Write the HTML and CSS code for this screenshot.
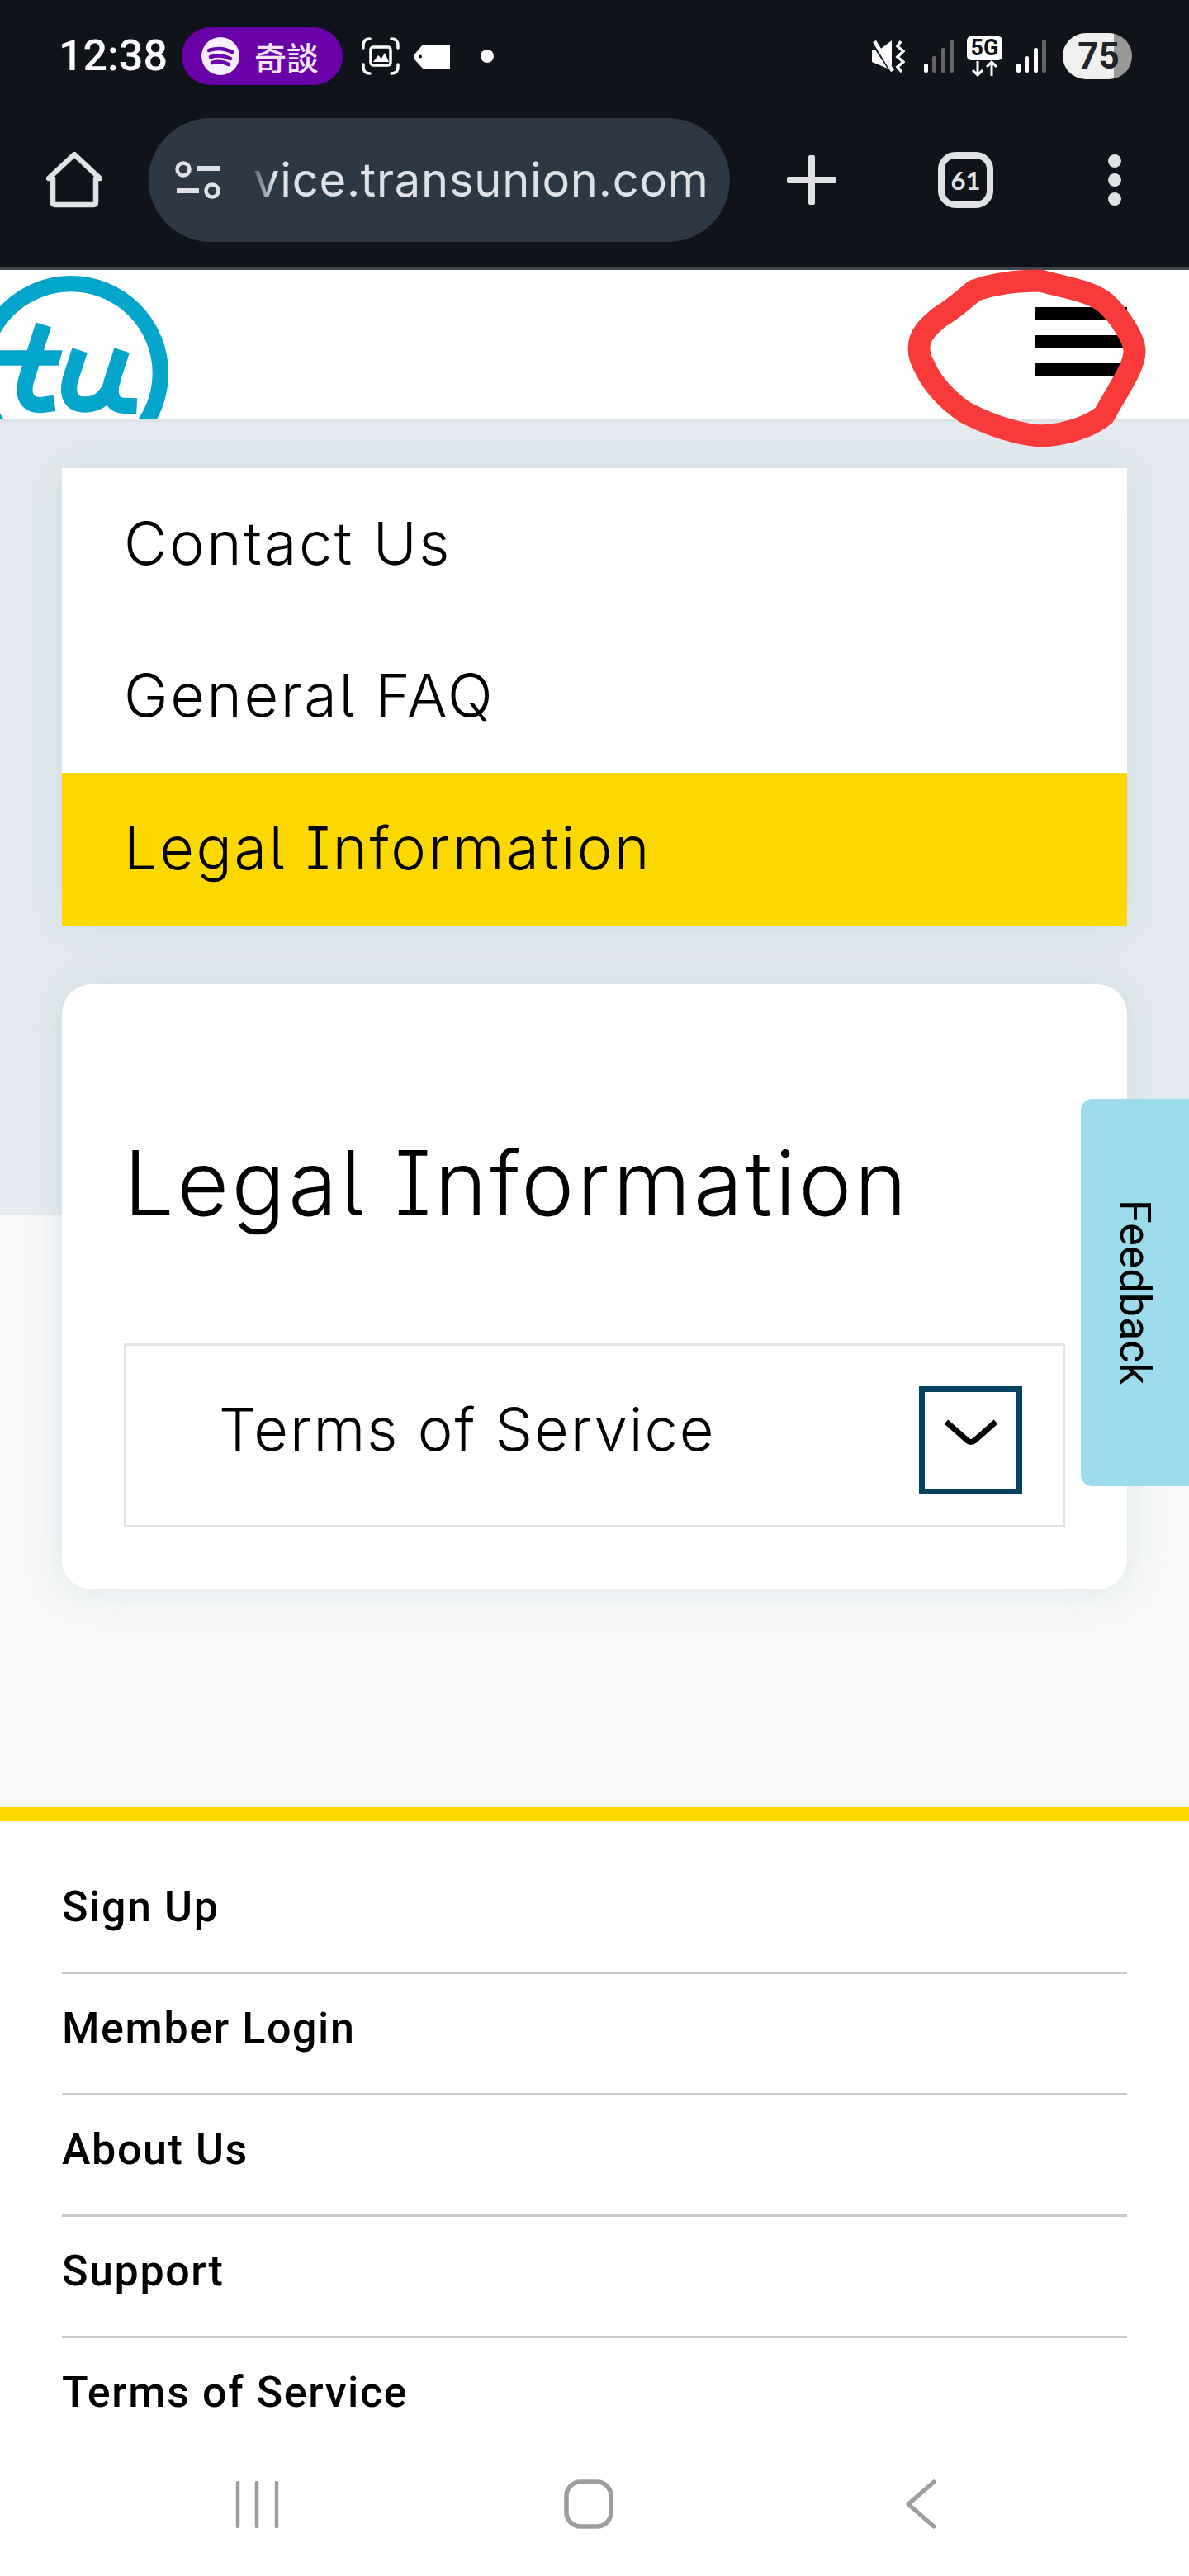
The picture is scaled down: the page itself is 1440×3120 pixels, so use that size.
FILE: index.html
```html
<!DOCTYPE html>
<html lang="en">
<head>
    <meta charset="UTF-8">
    <title>Legal Information</title>
    <link rel="stylesheet" href="styles.css">
</head>
<body>
<div class="browser">
    <div class="status">
        <span class="time">12:38</span>
        <div class="media">
            <svg class="spot" viewBox="0 0 46 46">
                <circle cx="23" cy="23" r="23" fill="#f6eefb"/>
                <path d="M9 16Q23 11 37 18M11 24Q23 20 35 26M13 31Q23 28 33 33" fill="none" stroke="#6a00a8" stroke-width="4.500" stroke-linecap="round"/>
            </svg>
            <span class="media-name">奇談</span>
        </div>
        <svg class="shot" viewBox="0 0 46 46">
            <path d="M10 2Q2 2 2 10V13M36 2Q44 2 44 10V13M2 33V36Q2 44 10 44M44 33V36Q44 44 36 44" fill="none" stroke="#fff" stroke-width="3.500" stroke-linecap="round"/>
            <rect x="11" y="12" width="24" height="22" rx="3" fill="none" stroke="#fff" stroke-width="3.500"/>
            <path d="M14 30L20 22L24 26L28 19L33 30Z" fill="#fff"/>
        </svg>
        <svg class="tag" viewBox="0 0 44 29">
            <path d="M11 0H44V29H11L1 18Q0 15 1 12Z" fill="#fff"/>
            <circle cx="8" cy="14.500" r="2" fill="#10141a"/>
        </svg>
        <span class="dot"></span>
        <span class="status-gap"></span>
        <svg class="mute" viewBox="0 0 40 39">
            <path d="M0 12H8L24 0V36L0 26Z" fill="#fff"/>
            <path d="M1 1L25 38" stroke="#10141a" stroke-width="6"/>
            <path d="M3 1L25 37" stroke="#fff" stroke-width="4.500"/>
            <path d="M35 1L31 7L38 13L31 20L38 26L31 32L36 38" fill="none" stroke="#fff" stroke-width="3.500"/>
        </svg>
        <svg class="signal" viewBox="0 0 36 40">
            <rect x="0" y="29" width="5" height="11" rx="2" fill="#fff"/>
            <rect x="10" y="20" width="5" height="20" rx="2" fill="#666"/>
            <rect x="21" y="10" width="5" height="30" rx="2" fill="#666"/>
            <rect x="31" y="0" width="5" height="40" rx="2" fill="#666"/>
        </svg>
        <div class="net">
            <span class="net-label">5G</span>
            <svg class="net-arrows" viewBox="0 0 36 20">
                <path d="M9 1V18M3 12L9 18L15 12M26 19V2M20 8L26 2L32 8" fill="none" stroke="#fff" stroke-width="3"/>
            </svg>
        </div>
        <svg class="signal" viewBox="0 0 36 40">
            <rect x="0" y="29" width="5" height="11" rx="2" fill="#fff"/>
            <rect x="10" y="20" width="5" height="20" rx="2" fill="#fff"/>
            <rect x="21" y="10" width="5" height="30" rx="2" fill="#fff"/>
            <rect x="31" y="0" width="5" height="40" rx="2" fill="#666"/>
        </svg>
        <div class="battery">75</div>
    </div>
    <div class="toolbar">
        <svg class="home" viewBox="0 0 68 68">
            <path d="M11 64H57Q60 64 60 61V32H65L34 3L3 32H8V61Q8 64 11 64Z" fill="none" stroke="#dfe1e6" stroke-width="6.500" stroke-linejoin="round"/>
        </svg>
        <div class="url">
            <svg class="tune" viewBox="0 0 55 46">
                <circle cx="10" cy="10" r="7.500" fill="none" stroke="#dfe1e6" stroke-width="4.500"/>
                <path d="M27 9H54M2 36H29" stroke="#dfe1e6" stroke-width="6"/>
                <circle cx="45" cy="36" r="7.500" fill="none" stroke="#dfe1e6" stroke-width="4.500"/>
            </svg>
            <span class="url-text">vice.transunion.com</span>
        </div>
        <svg class="plus" viewBox="0 0 60 60">
            <path d="M30 3V57M3 30H57" stroke="#dfe1e6" stroke-width="8" stroke-linecap="round"/>
        </svg>
        <div class="tabs">61</div>
        <div class="more"><i></i><i></i><i></i></div>
    </div>
</div>

<header class="site-head">
    <svg class="logo" viewBox="0 21 660 543">
        <circle cx="258" cy="396" r="325" fill="none" stroke="#04a5cb" stroke-width="58"/>
        <path d="M0 313H227L212 368H0Z" fill="#04a5cb"/>
        <path d="M158 220L95 420Q72 512 150 512L198 505" fill="none" stroke="#04a5cb" stroke-width="58"/>
        <path d="M290 313L255 420Q235 510 310 510Q385 510 410 420M443 313L405 430Q392 512 450 514L497 516" fill="none" stroke="#04a5cb" stroke-width="58"/>
    </svg>
    <div class="burger"><i></i><i></i><i></i></div>
    <svg class="scribble" viewBox="0 0 380 240">
        <path d="M53 112C53 95 65 85 78 74C92 66 105 55 120 42C140 35 170 30 200 30C228 38 262 42 280 58C295 72 314 100 314 115C314 135 295 160 277 193C260 207 230 217 200 218C170 216 135 203 110 190C90 177 70 157 60 135C55 125 53 120 53 112Z" fill="none" stroke="#f93a3a" stroke-width="27" stroke-linejoin="round"/>
    </svg>
</header>

<main class="content">
    <ul class="side">
        <li>Contact Us</li>
        <li>General FAQ</li>
        <li class="on">Legal Information</li>
    </ul>
    <section class="card">
        <h1>Legal Information</h1>
        <div class="drop">
            <span class="drop-label">Terms of Service</span>
            <button class="drop-btn">
                <svg viewBox="0 0 64 32"><path d="M2 3L28 26Q32 29 36 26L62 3" fill="none" stroke="#000" stroke-width="7"/></svg>
            </button>
        </div>
    </section>
</main>

<footer class="foot">
    <ul>
        <li>Sign Up</li>
        <li>Member Login</li>
        <li>About Us</li>
        <li>Support</li>
        <li>Terms of Service</li>
    </ul>
</footer>

<nav class="sysnav">
    <svg class="sys-recent" viewBox="0 0 53 57">
        <path d="M3 2V55M26 2V55M50 2V55" stroke="#9e9e9e" stroke-width="4.500" stroke-linecap="round"/>
    </svg>
    <svg class="sys-home" viewBox="0 0 60 60">
        <rect x="3" y="3" width="54" height="54" rx="17" fill="none" stroke="#9e9e9e" stroke-width="5.500"/>
    </svg>
    <svg class="sys-back" viewBox="0 0 38 60">
        <path d="M35 3L4 30L35 57" fill="none" stroke="#9e9e9e" stroke-width="5" stroke-linecap="round" stroke-linejoin="round"/>
    </svg>
</nav>

<div class="feedback">Feedback</div>
</body>
</html>
```

FILE: styles.css
```css
* {
    padding: 0;
    margin: 0;
    box-sizing: border-box;
}

body {
    width: 1440px;
    height: 3120px;
    overflow: hidden;
    position: relative;
    background: #fff;
    color: #000;
    font-family: Inter, "Open Sans", sans-serif;
    font-feature-settings: "cv05", "cv08";
}

ul {
    list-style: none;
}

/* browser chrome */
.browser {
    height: 327px;
    background: #10141a;
    border-bottom: 4px solid #3f464d;
}

.status {
    height: 136px;
    padding-left: 71px;
    display: flex;
    align-items: center;
    color: #fff;
}

.time {
    width: 149px;
    font-family: Roboto, sans-serif;
    font-size: 52px;
    font-weight: 500;
    line-height: 1;
}

.media {
    width: 195px;
    height: 70px;
    border-radius: 35px;
    background: #6a00a8;
    padding-left: 24px;
    display: flex;
    align-items: center;
    gap: 18px;
}

.spot {
    width: 46px;
    height: 46px;
}

.media-name {
    font-family: "Noto Sans CJK TC", sans-serif;
    font-size: 39px;
    font-weight: 500;
    line-height: 1;
    color: #f3e6f8;
}

.shot {
    width: 46px;
    height: 46px;
    margin-left: 23px;
}

.tag {
    width: 44px;
    height: 29px;
    margin-left: 17px;
}

.dot {
    width: 16px;
    height: 16px;
    margin-left: 37px;
    border-radius: 50%;
    background: #fff;
}

.status-gap {
    width: 458px;
}

.mute {
    width: 40px;
    height: 39px;
}

.signal {
    width: 36px;
    height: 40px;
}

.mute + .signal {
    margin-left: 23px;
}

.net {
    width: 43px;
    margin: 0 17px 0 16px;
}

.net-label {
    display: block;
    height: 29px;
    border-radius: 5px;
    background: #fff;
    color: #10141a;
    font-family: Roboto, sans-serif;
    font-size: 27px;
    font-weight: 700;
    line-height: 29px;
    text-align: center;
}

.net-arrows {
    display: block;
    width: 36px;
    height: 20px;
    margin: 0 auto;
}

.battery {
    width: 84px;
    height: 56px;
    margin-left: 20px;
    border-radius: 28px;
    background: linear-gradient(90deg, #efefef 74%, #989898 74%);
    color: #20242a;
    font-family: Roboto, sans-serif;
    font-size: 44px;
    font-weight: 700;
    line-height: 56px;
    text-align: center;
    padding-left: 3px;
}

.toolbar {
    height: 187px;
    padding: 7px 0 30px 56px;
    display: flex;
    align-items: center;
}

.home {
    width: 68px;
    height: 68px;
}

.url {
    width: 704px;
    height: 150px;
    margin-left: 56px;
    border-radius: 75px;
    background: #2d3844;
    padding-left: 32px;
    display: flex;
    align-items: center;
}

.tune {
    width: 55px;
    height: 46px;
    flex: none;
}

.url-text {
    width: 556px;
    margin-left: 40px;
    white-space: nowrap;
    font-family: Inter, sans-serif;
    font-feature-settings: normal;
    font-size: 56px;
    line-height: 76px;
    letter-spacing: .8px;
    color: #dfe1e6;
    -webkit-mask-image: linear-gradient(90deg, rgba(0, 0, 0, .25) 0, #000 26px);
    mask-image: linear-gradient(90deg, rgba(0, 0, 0, .25) 0, #000 26px);
}

.plus {
    width: 60px;
    height: 60px;
    margin-left: 69px;
}

.tabs {
    width: 67px;
    height: 68px;
    margin-left: 123px;
    border: 8px solid #dfe1e6;
    border-radius: 21px;
    color: #dfe1e6;
    font-family: Lato, sans-serif;
    font-size: 31px;
    font-weight: 700;
    line-height: 52px;
    text-align: center;
}

.more {
    margin-left: 139px;
    display: flex;
    flex-direction: column;
    gap: 7px;
}

.more i {
    width: 16px;
    height: 16px;
    border-radius: 50%;
    background: #dfe1e6;
}

/* site header */
.site-head {
    height: 184px;
    background: #fff;
    border-bottom: 3px solid #dfe2e4;
    display: flex;
    justify-content: space-between;
    padding-right: 75px;
    position: relative;
}

.logo {
    width: 220px;
    height: 181px;
}

.burger {
    width: 112px;
    padding-top: 45px;
    display: flex;
    flex-direction: column;
    gap: 19px;
}

.burger i {
    height: 15px;
    background: #000;
}

.scribble {
    position: absolute;
    left: 1060px;
    top: -17px;
    width: 380px;
    height: 240px;
    z-index: 2;
}

/* main */
.content {
    height: 1677px;
    padding: 56px 75px 0;
    background: linear-gradient(180deg, #e4eaef 960px, #f7f8f8 960px);
}

.side {
    background: #fff;
    box-shadow: 0 0 44px rgba(160, 185, 200, .3);
}

.side li {
    height: 184.5px;
    padding: 0 0 4px 75px;
    display: flex;
    align-items: center;
    font-size: 72px;
    font-weight: 300;
    letter-spacing: 2.6px;
}

.side .on {
    background: #fdd800;
}

.card {
    height: 733px;
    margin-top: 71px;
    padding: 0 75px;
    border-radius: 36px;
    background: #fff;
    box-shadow: 0 0 44px rgba(160, 185, 200, .3);
}

.card h1 {
    height: 435px;
    padding-top: 176px;
    font-size: 108px;
    font-weight: 300;
    line-height: 130px;
    letter-spacing: 3.5px;
}

.drop {
    height: 223px;
    border: 3px solid #dde5e9;
    padding: 0 49px 0 112px;
    display: flex;
    justify-content: space-between;
    align-items: center;
    font-size: 72px;
    font-weight: 300;
    letter-spacing: 2px;
}

.drop-label {
    margin-bottom: 16px;
}

.drop-btn {
    width: 125px;
    height: 131px;
    margin-top: 12px;
    border: 7px solid #04425f;
    background: #fff;
    display: flex;
    justify-content: center;
    align-items: center;
}

.drop-btn svg {
    width: 64px;
    height: 32px;
    margin-top: -18px;
}

/* footer */
.foot {
    height: 782px;
    border-top: 18px solid #fdd800;
    padding: 38px 75px 0;
    background: #fff;
    overflow: hidden;
}

.foot li {
    height: 147px;
    padding-top: 38px;
    border-bottom: 3px solid #c8c8c8;
    font-family: Roboto, sans-serif;
    font-size: 52px;
    font-weight: 500;
    line-height: 56px;
    letter-spacing: 1.6px;
}

.foot li:last-child {
    border-bottom: 0;
}

.sysnav {
    position: absolute;
    left: 0;
    top: 2964px;
    width: 1440px;
    height: 156px;
    background: #fff;
    padding: 39px 14px 0 0;
    display: grid;
    grid-template-columns: repeat(3, 402px);
    justify-content: center;
    justify-items: center;
}

.sys-recent {
    width: 53px;
    height: 57px;
    margin-top: 2px;
}

.sys-home {
    width: 60px;
    height: 60px;
}

.sys-back {
    width: 38px;
    height: 60px;
}

.feedback {
    position: absolute;
    left: 1309px;
    top: 1331px;
    width: 131px;
    height: 469px;
    border-radius: 14px 0 0 14px;
    background: #9bdbeb;
    writing-mode: vertical-rl;
    display: flex;
    align-items: center;
    justify-content: center;
    padding-bottom: 2px;
    font-family: Roboto, sans-serif;
    font-size: 52px;
}
```
